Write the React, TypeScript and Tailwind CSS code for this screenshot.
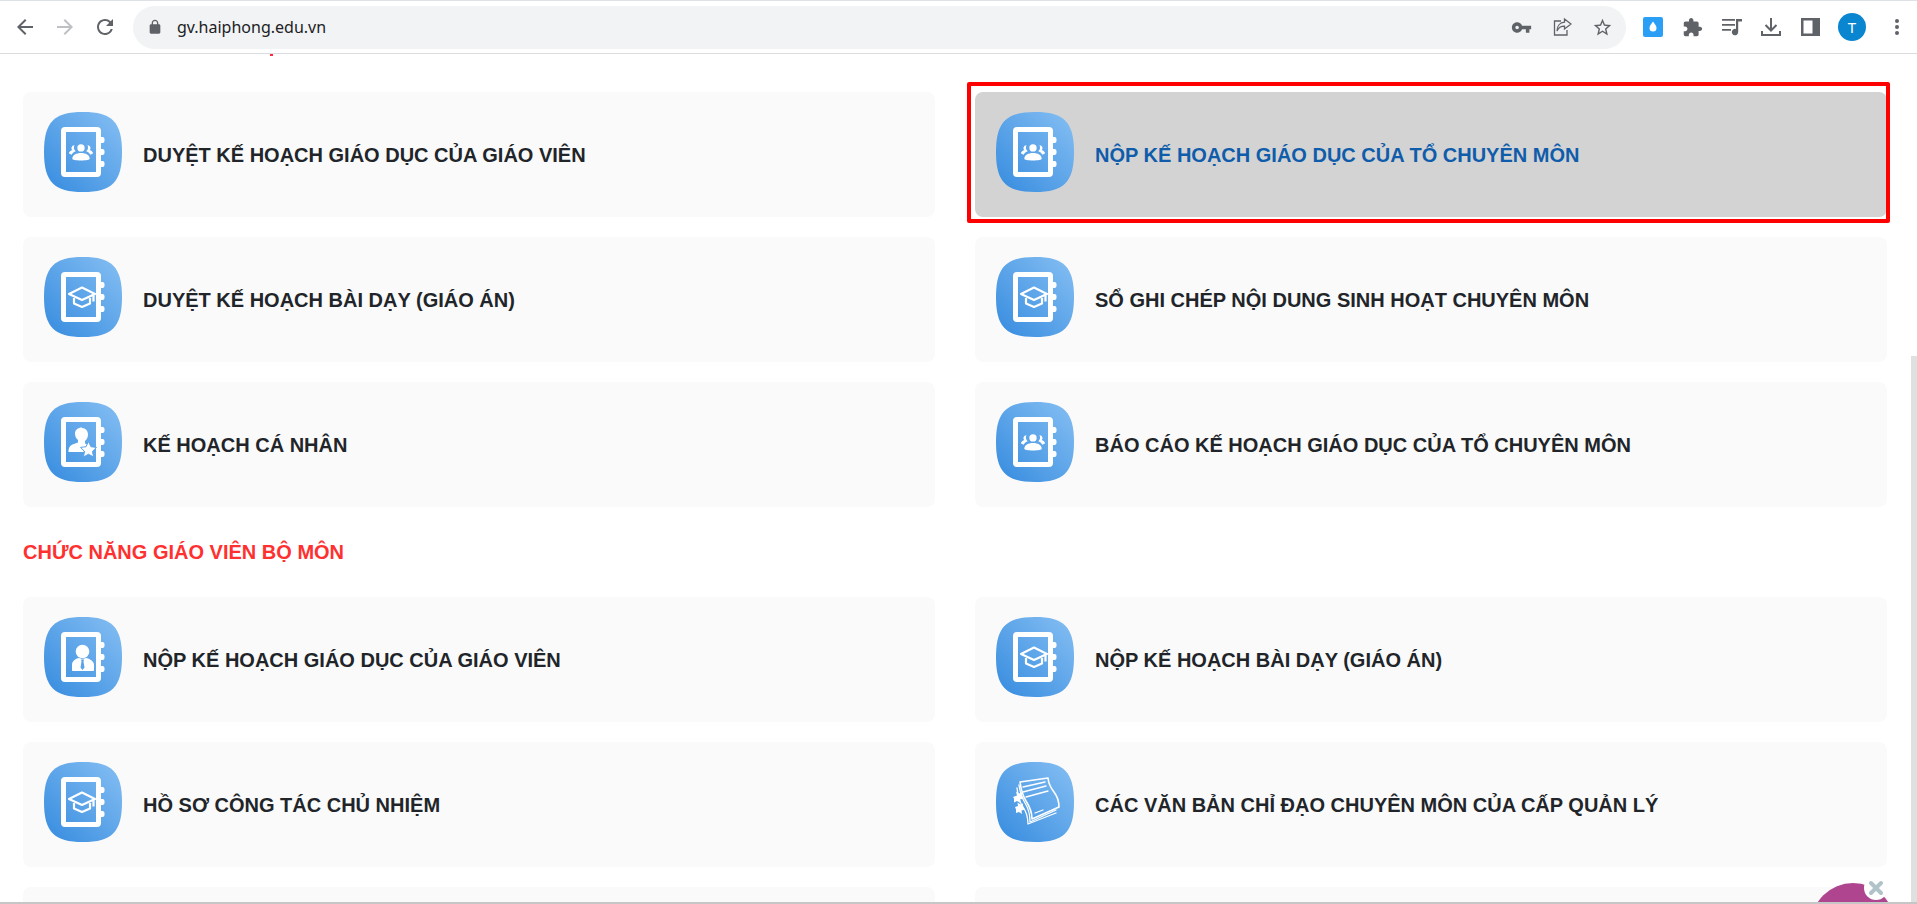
import React from 'react'

const BookFrame = () => (
  <>
    <rect x="19.5" y="17.5" width="35" height="45" rx="1.5" fill="none" stroke="#fff" strokeWidth="5" />
    <path d="M57 25h1.5a2 2 0 0 1 2 2v2a2 2 0 0 1-2 2H57zM57 37h1.5a2 2 0 0 1 2 2v2a2 2 0 0 1-2 2H57zM57 49h1.5a2 2 0 0 1 2 2v2a2 2 0 0 1-2 2H57z" fill="#fff" />
  </>
)

const People = () => (
  <g fill="#fff" transform="translate(4.800 5) scale(.87)">
    <circle cx="37" cy="35.500" r="4.200" />
    <path d="M27 48c0-4 4.500-6.500 10-6.500s10 2.500 10 6.500c0 1-4 2-10 2s-10-1-10-2z" />
    <path d="M29.500 32.500a3.200 3.200 0 0 0-2.500 5.500c-1.800.7-3.500 2-4 3.800.8.800 2 1.300 3.300 1.500 1-1.800 2.700-3 4.700-3.800a6 6 0 0 1-1.500-7z" />
    <path d="M44.500 32.500a3.200 3.200 0 0 1 2.500 5.500c1.800.7 3.500 2 4 3.800-.8.800-2 1.300-3.300 1.500-1-1.800-2.700-3-4.700-3.800a6 6 0 0 0 1.500-7z" />
  </g>
)

const Cap = () => (
  <g fill="none" stroke="#fff" strokeWidth="2.200" strokeLinejoin="round">
    <path d="M38 30.500 51 37l-13 6-13-6z" />
    <path d="M30 41v5.500l8 3.500 8-3.500V41" />
    <path d="M49.500 38.500v6" />
  </g>
)

const UserStar = () => (
  <g>
    <path d="M38 26c3.800 0 6 3 6 6.500 0 2.800-1.200 5-3 6.500v2.500l3 1.500-5 5.500 1 1.500H24.500c0-4.500 1.500-6.500 4-7.500l5.500-2v-2.500c-1.800-1.500-3-3.700-3-6.500 0-3.500 3-6 7-6z" fill="#fff" />
    <path d="m44.500 39.500 2.500 5.200 5.500.7-4 3.900 1 5.700-5-2.800-5 2.800 1-5.700-4-3.900 5.500-.7z" fill="#fff" stroke="#5ba3e8" strokeWidth="1" />
  </g>
)

const UserTie = () => (
  <g>
    <circle cx="38.500" cy="34.500" r="6.800" fill="#fff" />
    <path d="M28 53v-5c0-4 3.500-6.500 7-7l3.500 1 3.500-1c3.500.5 8 3 8 7v5c0 .6-.5 1-1 1H29c-.6 0-1-.4-1-1z" fill="#fff" />
    <path d="m37 42.500h3l-.5 2 1 6-2 2.500-2-2.500 1-6z" fill="#5ba3e8" />
  </g>
)

const Docs = () => (
  <g fill="none" stroke="#fff" strokeLinejoin="round" strokeLinecap="round">
    <path d="M24 20 52 16c.5 5 2 9 6 14 3 4 5 9 5 15L36 57c0-7-2-12-6-18-3-5-5-12-6-19z" strokeWidth="1.600" />
    <path d="M23 23c1 7 3 13 6 18 4 6 5 12 5 19l26-12" strokeWidth="1.300" />
    <path d="M21 26c1 8 3 15 6 19 4 6 5 11 5 17l28-11" strokeWidth="1.300" />
    <path d="M27 25 49 20M27 30 50 24M30 35 52 29M39 51 47 48" strokeWidth="1.300" />
    <path d="m17 35 4-1.500-1-4 3.500 2 2.500-1.500v4l2 2.500-4 1 .5 3.500-3.500-2-3 1.500v-4zM19 45l3-1-.5-3.500 3 2 2.500-1v3.500l2 2.500-3.500 1 .5 3.500-3-2-3 1v-3.500z" fill="#fff" stroke="none" />
  </g>
)

const glyphs = {
  people: <><BookFrame /><People /></>,
  cap: <><BookFrame /><Cap /></>,
  star: <><BookFrame /><UserStar /></>,
  tie: <><BookFrame /><UserTie /></>,
  docs: <Docs />,
}

type Glyph = keyof typeof glyphs

const AppIcon = ({ glyph }: { glyph: Glyph }) => (
  <svg width="78" height="80" viewBox="0 0 78 80" className="shrink-0 mb-[5px]">
    <defs>
      <linearGradient id={`tile-${glyph}`} x1="0" y1="1" x2="1" y2="0">
        <stop offset="0" stopColor="#358bdf" />
        <stop offset="1" stopColor="#86bff3" />
      </linearGradient>
    </defs>
    <path d="M39 0C68 0 78 10 78 40C78 70 68 80 39 80C10 80 0 70 0 40C0 10 10 0 39 0Z" fill={`url(#tile-${glyph})`} />
    {glyphs[glyph]}
  </svg>
)

const Card = ({ glyph, label, active }: { glyph: Glyph; label: string; active?: boolean }) => (
  <div className={`flex items-center gap-[21px] h-[125px] pl-[21px] rounded-lg ${active ? 'bg-[#d3d3d3]' : 'bg-[#fafafa]'}`}>
    <AppIcon glyph={glyph} />
    <span className={`text-[20px] font-bold ${active ? 'text-[#0f5cab]' : 'text-[#212529]'}`}>{label}</span>
  </div>
)

const ToolIcon = ({ d, size = 24, color = '#5f6368' }: { d: string; size?: number; color?: string }) => (
  <svg width={size} height={size} viewBox="0 0 24 24" fill={color} className="shrink-0">
    <path d={d} />
  </svg>
)

const BrowserBar = () => (
  <div className="flex items-center h-[54px] border-t border-b border-t-[#dee1e6] border-b-[#dadce0] bg-white pl-[13px] pr-[17px]">
    <div className="flex items-center gap-[16px]">
      <ToolIcon d="M20 11H7.830l5.590-5.590L12 4l-8 8 8 8 1.410-1.410L7.830 13H20v-2z" />
      <ToolIcon d="M4 11h12.170l-5.590-5.590L12 4l8 8-8 8-1.410-1.410L16.170 13H4v-2z" color="#bdc1c6" />
      <ToolIcon d="M17.650 6.350A7.958 7.958 0 0 0 12 4c-4.420 0-7.990 3.580-7.990 8s3.570 8 7.990 8c3.730 0 6.840-2.550 7.730-6h-2.080A5.990 5.990 0 0 1 12 18c-3.310 0-6-2.690-6-6s2.690-6 6-6c1.660 0 3.140.69 4.220 1.780L13 11h7V4l-2.350 2.350z" />
    </div>
    <div className="flex items-center flex-1 h-[43px] ml-[16px] rounded-full bg-[#f1f3f4] pl-[14px] pr-[13px]">
      <ToolIcon size={16} d="M18 8h-1V6c0-2.760-2.240-5-5-5S7 3.240 7 6v2H6c-1.100 0-2 .9-2 2v10c0 1.100.9 2 2 2h12c1.100 0 2-.9 2-2V10c0-1.100-.9-2-2-2zM9 8V6c0-1.660 1.340-3 3-3s3 1.340 3 3v2H9z" />
      <span className="ml-[14px] text-[16px] text-[#202124] font-['Noto_Sans','Liberation_Sans',sans-serif]">gv.haiphong.edu.vn</span>
      <div className="flex items-center gap-[20px] ml-auto">
        <ToolIcon size={21} d="M12.650 10C11.830 7.670 9.610 6 7 6c-3.310 0-6 2.690-6 6s2.690 6 6 6c2.610 0 4.830-1.670 5.650-4H17v4h4v-4h2v-4H12.650zM7 14c-1.100 0-2-.9-2-2s.9-2 2-2 2 .9 2 2-.9 2-2 2z" />
        <svg width="20" height="20" viewBox="0 0 20 20" fill="none" stroke="#5f6368" strokeWidth="1.300" className="shrink-0">
          <path d="M9 4H2.500v14H15v-5" />
          <path d="M12.500 2 19 7l-6.500 5V9.200C9 9.200 6.500 10.500 5 14c0-5 3-8.500 7.500-8.800z" />
        </svg>
        <ToolIcon size={21} d="M22 9.240l-7.190-.62L12 2 9.190 8.630 2 9.240l5.460 4.730L5.820 21 12 17.270 18.180 21l-1.630-7.030L22 9.240zM12 15.400l-3.760 2.270 1-4.280-3.320-2.880 4.380-.38L12 6.100l1.710 4.040 4.380.38-3.320 2.880 1 4.280L12 15.400z" />
      </div>
    </div>
    <div className="flex items-center ml-[17px] gap-[19px]">
      <svg width="20" height="20" viewBox="0 0 20 20" className="shrink-0">
        <rect width="20" height="20" rx="2" fill="#2b9ff5" />
        <path d="M10 4.500c2 2.800 3.500 4.600 3.500 6.600a3.500 3.500 0 0 1-7 0c0-2 1.500-3.800 3.500-6.600z" fill="#fff" />
      </svg>
      <ToolIcon size={21} d="M20.500 11H19V7c0-1.100-.9-2-2-2h-4V3.500C13 2.120 11.880 1 10.500 1S8 2.120 8 3.500V5H4c-1.100 0-1.990.9-1.990 2v3.800H3.500c1.490 0 2.700 1.210 2.700 2.700s-1.210 2.700-2.700 2.700H2V20c0 1.100.9 2 2 2h3.800v-1.500c0-1.490 1.210-2.700 2.700-2.700 1.490 0 2.700 1.210 2.700 2.700V22H17c1.100 0 2-.9 2-2v-4h1.500c1.380 0 2.500-1.120 2.500-2.500S21.880 11 20.500 11z" />
      <svg width="20" height="20" viewBox="0 0 20 20" fill="#5f6368" className="shrink-0">
        <path d="M0 2h13v1.800H0zM0 7h13v1.800H0zM0 12h9v1.800H0z" />
        <path d="M14 2h6v2.400h-3.800V15a3.200 3.200 0 1 1-2.200-3z" />
      </svg>
      <svg width="20" height="20" viewBox="0 0 20 20" fill="none" stroke="#5f6368" strokeWidth="2" className="shrink-0">
        <path d="M10 1v12M4.500 8l5.500 5.500L15.500 8M1 14v4h18v-4" />
      </svg>
      <svg width="19" height="18" viewBox="0 0 19 18" className="shrink-0 mx-[1px]">
        <path d="M0 0h19v18H0zM2.500 2.500v13h9v-13z" fill="#5f6368" fillRule="evenodd" />
      </svg>
    </div>
    <div className="flex items-center justify-center w-[28px] h-[28px] ml-[17px] rounded-full bg-[#0a86d1] text-white text-[15px] font-['Noto_Sans','Liberation_Sans',sans-serif]">T</div>
    <svg width="6" height="18" viewBox="0 0 6 18" fill="#5f6368" className="ml-[28px] shrink-0">
      <circle cx="3" cy="3" r="2" />
      <circle cx="3" cy="9" r="2" />
      <circle cx="3" cy="15" r="2" />
    </svg>
  </div>
)

export default function App() {
  return (
    <div className="relative h-[904px] overflow-hidden bg-white font-['Liberation_Sans',Arial,sans-serif]">
      <BrowserBar />

      <div className="h-[848px] overflow-hidden">
        {/* tail of the heading that is scrolled away */}
        <div className="h-[2px] w-[3px] ml-[270px] bg-[#ff2a40]" />
        <div className="pt-[36px] pl-[23px] pr-[30px]">
          <div className="grid grid-cols-2 gap-x-[40px] gap-y-[20px]">
            <Card glyph="people" label="DUYỆT KẾ HOẠCH GIÁO DỤC CỦA GIÁO VIÊN" />
            <Card glyph="people" label="NỘP KẾ HOẠCH GIÁO DỤC CỦA TỔ CHUYÊN MÔN" active />
            <Card glyph="cap" label="DUYỆT KẾ HOẠCH BÀI DẠY (GIÁO ÁN)" />
            <Card glyph="cap" label="SỔ GHI CHÉP NỘI DUNG SINH HOẠT CHUYÊN MÔN" />
            <Card glyph="star" label="KẾ HOẠCH CÁ NHÂN" />
            <Card glyph="people" label="BÁO CÁO KẾ HOẠCH GIÁO DỤC CỦA TỔ CHUYÊN MÔN" />
          </div>

          <div className="flex items-center h-[90px] text-[20px] font-bold text-[#ff3030]">CHỨC NĂNG GIÁO VIÊN BỘ MÔN</div>

          <div className="grid grid-cols-2 gap-x-[40px] gap-y-[20px]">
            <Card glyph="tie" label="NỘP KẾ HOẠCH GIÁO DỤC CỦA GIÁO VIÊN" />
            <Card glyph="cap" label="NỘP KẾ HOẠCH BÀI DẠY (GIÁO ÁN)" />
            <Card glyph="cap" label="HỒ SƠ CÔNG TÁC CHỦ NHIỆM" />
            <Card glyph="docs" label="CÁC VĂN BẢN CHỈ ĐẠO CHUYÊN MÔN CỦA CẤP QUẢN LÝ" />
            <div className="h-[125px] rounded-lg bg-[#fafafa]" />
            <div className="h-[125px] rounded-lg bg-[#fafafa]" />
          </div>
        </div>
      </div>

      <div className="h-[2px] bg-[#c6c6c6]" />

      {/* red annotation round the highlighted card */}
      <div className="absolute left-[967px] top-[82px] w-[923px] h-[141px] border-[4px] border-[#ff0000] rounded-[2px]" />

      {/* scrollbar */}
      <div className="absolute right-0 top-[356px] bottom-[2px] w-[6px] bg-[#e0e0e0]" />

      {/* chat bubble, mostly under the fold */}
      <div className="absolute left-[1811px] top-[883px] w-[84px] h-[19px] overflow-hidden">
        <div className="w-[84px] h-[84px] rounded-full bg-[#b0458f]" />
      </div>
      <div className="absolute left-[1864px] top-[876px] flex items-center justify-center w-[24px] h-[24px] rounded-full bg-white">
        <svg width="16" height="16" viewBox="0 0 16 16" stroke="#b0c2ca" strokeWidth="4" strokeLinecap="round">
          <path d="M3 3l10 10M13 3 3 13" />
        </svg>
      </div>
    </div>
  )
}
